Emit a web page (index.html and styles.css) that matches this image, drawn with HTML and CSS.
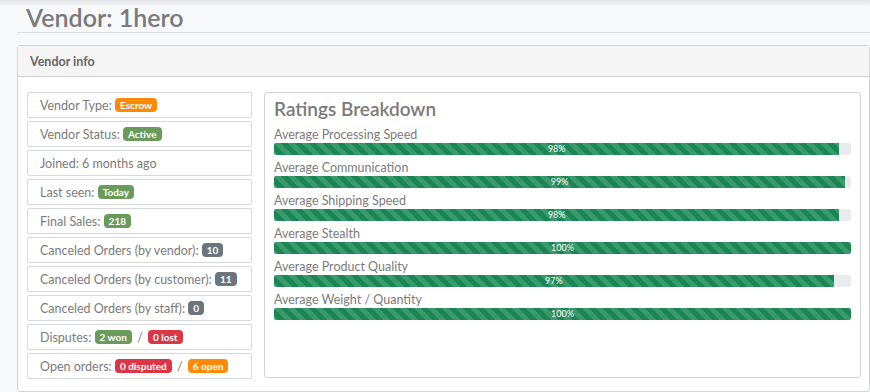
FILE: index.html
```html
<!DOCTYPE html>
<html lang="en">
<head>
    <meta charset="UTF-8">
    <meta name="viewport" content="width=device-width, initial-scale=1.0">
    <title>Vendor: 1hero</title>
    <link rel="stylesheet" href="styles.css">
</head>
<body>
    <div class="topshadow"></div>
    <div class="page">
        <h1 class="pagetitle">Vendor: 1hero</h1>

        <div class="card">
            <div class="cardhead">Vendor info</div>
            <div class="cardbody">
                <!-- vendor facts -->
                <ul class="facts">
                    <li>Vendor Type: <span class="badge orange">Escrow</span></li>
                    <li>Vendor Status: <span class="badge green">Active</span></li>
                    <li>Joined: 6 months ago</li>
                    <li>Last seen: <span class="badge green">Today</span></li>
                    <li>Final Sales: <span class="badge green">218</span></li>
                    <li>Canceled Orders (by vendor): <span class="badge grey">10</span></li>
                    <li>Canceled Orders (by customer): <span class="badge grey">11</span></li>
                    <li>Canceled Orders (by staff): <span class="badge grey">0</span></li>
                    <li>Disputes: <span class="badge green">2 won</span> <span class="slash">/</span> <span class="badge red">0 lost</span></li>
                    <li>Open orders: <span class="badge red">0 disputed</span> <span class="slash">/</span> <span class="badge orange">6 open</span></li>
                </ul>

                <!-- ratings -->
                <div class="ratings">
                    <h2>Ratings Breakdown</h2>
                    <div class="rating">
                        <p>Average Processing Speed</p>
                        <div class="track"><div class="fill" style="width: 98%">98%</div></div>
                    </div>
                    <div class="rating">
                        <p>Average Communication</p>
                        <div class="track"><div class="fill" style="width: 99%">99%</div></div>
                    </div>
                    <div class="rating">
                        <p>Average Shipping Speed</p>
                        <div class="track"><div class="fill" style="width: 98%">98%</div></div>
                    </div>
                    <div class="rating">
                        <p>Average Stealth</p>
                        <div class="track"><div class="fill" style="width: 100%">100%</div></div>
                    </div>
                    <div class="rating">
                        <p>Average Product Quality</p>
                        <div class="track"><div class="fill" style="width: 97%">97%</div></div>
                    </div>
                    <div class="rating">
                        <p>Average Weight / Quantity</p>
                        <div class="track"><div class="fill" style="width: 100%">100%</div></div>
                    </div>
                </div>
            </div>
        </div>
    </div>
</body>
</html>
```

FILE: styles.css
```css
body{
    margin: 0;
    background-color: #f7f8fa;
    font-family: Lato, "Open Sans", sans-serif;
    color: #777;
    overflow: hidden;
}
.topshadow{
    position: absolute;
    top: 0;
    left: 0;
    right: 0;
    height: 6px;
    background: linear-gradient(#e2e3e6, rgba(247, 248, 250, 0));
}
.page{
    padding: 0 0 0 17px;
}
.pagetitle{
    margin: 0;
    padding: 2px 0 0 9px;
    height: 30px;
    font-size: 25px;
    font-weight: 600;
    color: #7a7a7a;
    border-bottom: 1px solid #dcdde1;
}
.card{
    margin-top: 12px;
    background-color: #fff;
    border: 1px solid #d2d2d2;
    border-radius: 3px;
    height: 345px;
}
.cardhead{
    height: 30px;
    line-height: 31px;
    padding-left: 12px;
    background-color: #f5f5f5;
    border-bottom: 1px solid #d2d2d2;
    font-size: 12.5px;
    font-weight: bold;
    color: #666;
}
.cardbody{
    display: flex;
    gap: 12px;
    padding: 15px 8px 0 9px;
}
.facts{
    list-style: none;
    margin: 0;
    padding: 0;
    width: 225px;
    display: flex;
    flex-direction: column;
    gap: 3px;
}
.facts li{
    height: 24px;
    line-height: 25px;
    padding-left: 12px;
    border: 1px solid #d6d8dc;
    border-radius: 2px;
    font-size: 12.5px;
    color: #7b7b7b;
}
.badge{
    display: inline-block;
    padding: 0 5px;
    height: 14px;
    line-height: 14px;
    border-radius: 4px;
    font-size: 10px;
    font-weight: bold;
    color: #fff;
    vertical-align: 1px;
}
.orange{ background-color: #fd8a06; }
.green{ background-color: #6b9a5d; }
.grey{ background-color: #6c757d; }
.red{ background-color: #dc3545; }
.slash{
    margin: 0 2px;
}
.ratings{
    width: 577px;
    height: 284px;
    padding: 0 9px;
    border: 1px solid #d4d4d4;
    border-radius: 3px;
}
.ratings h2{
    margin: 0;
    padding-top: 4px;
    height: 28px;
    font-size: 19px;
    font-weight: 600;
    color: #7a7a7a;
}
.rating p{
    margin: 0;
    height: 18px;
    line-height: 20px;
    font-size: 12.5px;
    color: #7b7b7b;
}
.track{
    height: 12px;
    margin-bottom: 3px;
    background-color: #e9ecef;
    border-radius: 2px;
    overflow: hidden;
}
.fill{
    height: 12px;
    line-height: 12px;
    text-align: center;
    font-size: 9px;
    color: #fff;
    background-color: #198754;
    background-image: linear-gradient(45deg, rgba(255,255,255,.15) 25%, transparent 25%, transparent 50%, rgba(255,255,255,.15) 50%, rgba(255,255,255,.15) 75%, transparent 75%, transparent);
    background-size: 14px 14px;
}
```
